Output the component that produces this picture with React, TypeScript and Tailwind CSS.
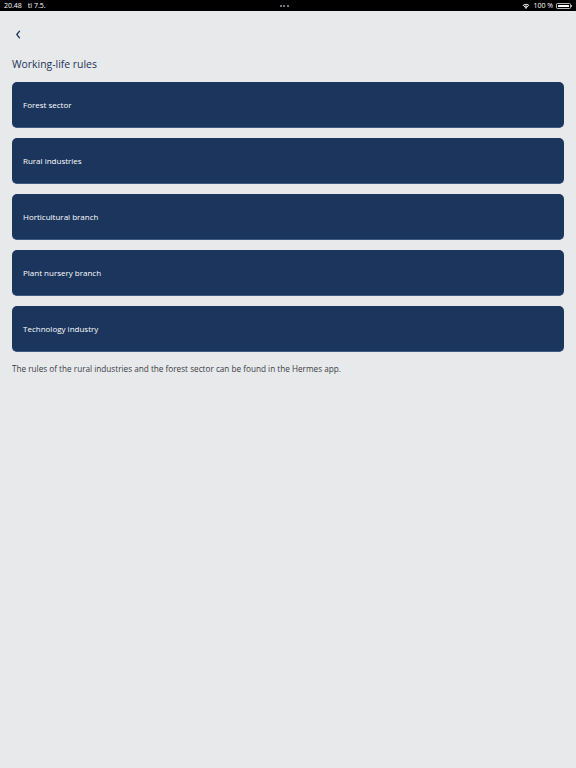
const items = [
  "Forest sector",
  "Rural industries",
  "Horticultural branch",
  "Plant nursery branch",
  "Technology industry",
];

function StatusBar() {
  return (
    <div className="h-[11px] bg-black text-white flex items-center justify-between px-[4px] text-[7px] leading-none">
      <div className="flex gap-[6px]">
        <span>20.48</span>
        <span>ti 7.5.</span>
      </div>
      <div className="flex gap-[1.5px]">
        <span className="w-[2px] h-[2px] rounded-full bg-gray-400" />
        <span className="w-[2px] h-[2px] rounded-full bg-gray-400" />
        <span className="w-[2px] h-[2px] rounded-full bg-gray-400" />
      </div>
      <div className="flex items-center gap-[3px]">
        <svg width="8" height="6" viewBox="0 0 16 12" fill="white">
          <path d="M8 12 L5.5 9.2 A3.6 3.6 0 0 1 10.5 9.2 Z" />
          <path d="M3.6 7.2 A6.5 6.5 0 0 1 12.4 7.2 L11.2 8.5 A4.8 4.8 0 0 0 4.8 8.5 Z" />
          <path d="M1.2 4.6 A10 10 0 0 1 14.8 4.6 L13.5 5.9 A8.2 8.2 0 0 0 2.5 5.9 Z" />
        </svg>
        <span>100 %</span>
        <div className="flex items-center">
          <div className="w-[15px] h-[6px] rounded-[1.5px] border border-white/70 p-[1px]">
            <div className="w-full h-full bg-white rounded-[0.5px]" />
          </div>
          <div className="w-[1px] h-[2px] bg-white/70" />
        </div>
      </div>
    </div>
  );
}

export default function App() {
  return (
    <div
      className="min-h-[768px] bg-[#e8e9eb]"
      style={{ fontFamily: '"Open Sans", "Noto Sans", sans-serif' }}
    >
      <StatusBar />
      <div className="px-[12px]">
        <div className="pt-[19px] pl-[3px] h-[45px]">
          <svg width="7" height="9" viewBox="0 0 7 9" fill="none">
            <path d="M4.5 1.2 L1.8 4.5 L4.5 7.8" stroke="#1b3358" strokeWidth="1.3" strokeLinecap="round" strokeLinejoin="round" />
          </svg>
        </div>
        <h1 className="text-[10.4px] leading-[16px] text-[#1b3358] font-medium">Working-life rules</h1>
        <div className="mt-[10px] flex flex-col gap-[10px]">
          {items.map((item) => (
            <button
              key={item}
              className="h-[46px] w-full rounded-[5px] bg-[#1b355c] text-left px-[11px] pt-[1px] text-white text-[8px] font-medium border-b border-[#3d5a82]"
            >
              {item}
            </button>
          ))}
        </div>
        <p className="mt-[11px] text-[8.2px] text-[#3a3f47]">
          The rules of the rural industries and the forest sector can be found in the Hermes app.
        </p>
      </div>
    </div>
  );
}
